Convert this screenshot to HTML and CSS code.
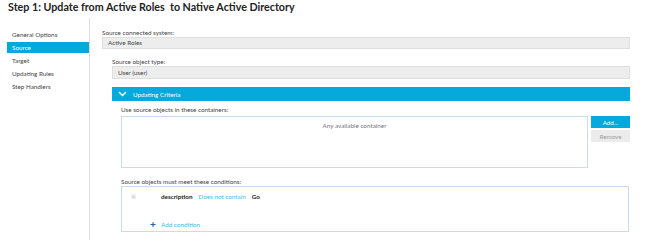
FILE: index.html
```html
<!DOCTYPE html>
<html lang="en">
  <head>
    <meta charset="UTF-8" />
    <title>Step 1</title>
    <link rel="stylesheet" href="styles.css">
  </head>
  <body>
    <h1 class="title">Step 1: Update from Active Roles&nbsp; to Native Active Directory</h1>
    <div class="layout">
      <ul class="steps">
        <li>General Options</li>
        <li class="active">Source</li>
        <li>Target</li>
        <li>Updating Rules</li>
        <li>Step Handlers</li>
      </ul>
      <div class="main">
        <div class="label">Source connected system:</div>
        <div class="field">Active Roles</div>
        <div class="nested">
          <div class="label second">Source object type:</div>
          <div class="field tall">User (user)</div>
          <div class="bar">
            <svg width="9" height="6" viewBox="0 0 9 6"><polyline points="1,1 4.5,4.5 8,1" fill="none" stroke="#fff" stroke-width="1.5"/></svg>
            <span>Updating Criteria</span>
          </div>
          <div class="criteria">
            <div class="label small-gap">Use source objects in these containers:</div>
            <div class="containers">
              <div class="list">Any available container</div>
              <div class="buttons">
                <button class="btn add">Add...</button>
                <button class="btn remove">Remove</button>
              </div>
            </div>
            <div class="label cond-label">Source objects must meet these conditions:</div>
            <div class="conditions">
              <div class="cond">
                <span class="x"><span class="x-box">&times;</span></span>
                <b class="attr">description</b>
                <span class="op">Does not contain</span>
                <b>Go</b>
              </div>
              <div class="add-cond">
                <span class="plus">+</span>
                <span>Add condition</span>
              </div>
            </div>
          </div>
        </div>
      </div>
    </div>
  </body>
</html>
```

FILE: styles.css
```css
body {
  margin: 0;
  font-family: Lato, "Liberation Sans", sans-serif;
  color: #333;
  background: #fff;
  width: 654px;
  height: 240px;
  overflow: hidden;
}

.title {
  margin: 0;
  padding-left: 8px;
  font-size: 10.7px;
  line-height: 13px;
  font-weight: 700;
  color: #222;
  height: 18px;
}

.layout {
  display: flex;
  height: 222px;
}

.steps {
  list-style: none;
  margin: 0 0 0 7px;
  padding: 11px 0 0 0;
  width: 82px;
  border-right: 1px solid #dcdcdc;
  font-size: 6.3px;
}

.steps li {
  height: 11px;
  line-height: 11px;
  padding-left: 5px;
  margin-bottom: 2px;
  color: #444;
}

.steps li.active {
  background: #05a9db;
  color: #fff;
}

.main {
  width: 528px;
  padding: 10px 0 0 12px;
  font-size: 6.3px;
}

.label {
  line-height: 9px;
  color: #444;
}

.second {
  margin-top: 8px;
}

.field {
  height: 12px;
  box-sizing: border-box;
  border: 1px solid #dedede;
  background: #ededed;
  line-height: 10px;
  padding-left: 5px;
  color: #444;
}

.field.tall {
  height: 13px;
  line-height: 11px;
}

.nested {
  margin-left: 10px;
}

.bar {
  margin-top: 8px;
  height: 14px;
  background: #05a9db;
  color: #fff;
  display: flex;
  align-items: center;
  padding-left: 6px;
  gap: 6px;
}

.criteria {
  margin-left: 9px;
}

.small-gap {
  margin-top: 3.5px;
}

.containers {
  display: flex;
  gap: 3px;
  margin-top: 2.5px;
}

.list {
  flex: 1;
  height: 52px;
  box-sizing: border-box;
  border: 1px solid #c9dcef;
  text-align: center;
  line-height: 9px;
  color: #777;
  padding-top: 4px;
}

.buttons {
  width: 39px;
  display: flex;
  flex-direction: column;
  gap: 2px;
}

.btn {
  height: 12px;
  border: 0;
  padding: 0;
  font-family: inherit;
  font-size: 6.3px;
}

.add {
  background: #05a9db;
  color: #fff;
}

.remove {
  background: #ececec;
  color: #a0a0a0;
}

.cond-label {
  margin-top: 8.5px;
}

.conditions {
  margin-top: 0.5px;
  height: 46px;
  box-sizing: border-box;
  border: 1px solid #c9dcef;
  margin-right: 1px;
  padding: 4px 0 0 9px;
}

.cond {
  display: flex;
  align-items: center;
  height: 10px;
}

.x {
  width: 30px;
}

.x-box {
  display: inline-block;
  width: 5px;
  height: 5px;
  line-height: 5px;
  text-align: center;
  background: #f0f0f0;
  color: #b5b5b5;
  font-size: 6px;
}

.attr {
  margin-right: 6px;
  color: #222;
}

.op {
  color: #46bde8;
  margin-right: 6px;
}

.cond b {
  color: #222;
}

.add-cond {
  margin-top: 18px;
  margin-left: 19px;
  display: flex;
  align-items: center;
  color: #46b6e3;
}

.plus {
  color: #1b5fb5;
  font-weight: 700;
  font-size: 10px;
  line-height: 10px;
  width: 11px;
}
```
